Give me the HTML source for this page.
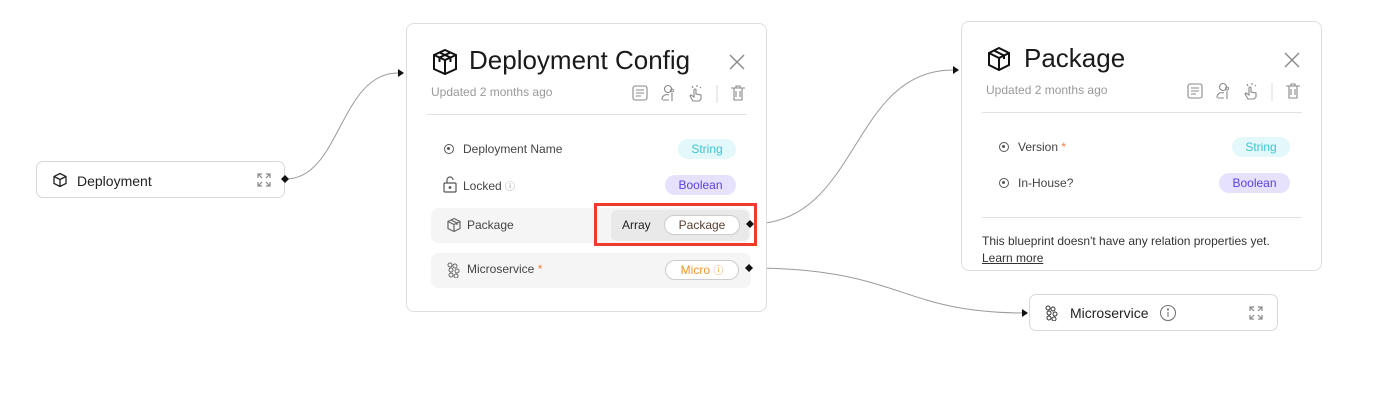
<!DOCTYPE html><html><head><style>
*{box-sizing:border-box;margin:0;padding:0}
body{width:1392px;height:407px;background:#fff;position:relative;overflow:hidden;font-family:"Liberation Sans",sans-serif;color:#222}
.abs{position:absolute}
.card{position:absolute;background:#fff;border:1px solid #dedee2;border-radius:8px}
.node{position:absolute;background:#fff;border:1px solid #d8d8dc;border-radius:7px;font-size:14px;color:#222}
.tag{position:absolute;height:20px;border-radius:10px;font-size:12px;line-height:20px;text-align:center}
.str{background:#e2f8fa;color:#3cc4d4}
.bool{background:#e6e2fd;color:#5b3fe0}
.lbl{position:absolute;font-size:12px;color:#444}
.gray{color:#999;font-size:12px}
.dot{position:absolute;width:10px;height:10px;border:1.3px solid #555;border-radius:50%}
.dot:after{content:"";position:absolute;left:2.2px;top:2.2px;width:3px;height:3px;background:#555;border-radius:50%}
</style></head><body>
<svg class="abs" style="left:0;top:0" width="1392" height="407">
<g fill="none" stroke="#9a9a9a" stroke-width="1">
<path d="M286 179 C340 179 340 73 398 73"/>
<path d="M751 224 C860 224 850 70 953 70"/>
<path d="M751 268 C900 268 900 313 1024 313"/>
</g>
<g fill="#111">
<path d="M398 69 L404 73 L398 77Z"/><path d="M953 66 L959 70 L953 74Z"/><path d="M1022 309 L1028 313 L1022 317Z"/>
</g></svg>

<div class="node" style="left:36px;top:161px;width:249px;height:37px">
<svg class="abs" style="left:15px;top:10px" width="16" height="16" viewBox="0 0 16 16" fill="none" stroke="#222" stroke-width="1.3"><path d="M8 1.5L14 4.5V11.5L8 14.5L2 11.5V4.5Z M2 4.5L8 7.5L14 4.5 M8 7.5V14.5"/></svg>
<span class="abs" style="left:40px;top:11px">Deployment</span>
<svg class="abs" style="left:219px;top:10px" width="16" height="16" viewBox="0 0 16 16" fill="none" stroke="#888" stroke-width="1.2"><path d="M2 6V2H6M2 2L6 6M10 2H14V6M14 2L10 6M2 10V14H6M2 14L6 10M14 10V14H10M14 14L10 10"/></svg>
</div>

<div class="card" style="left:406px;top:23px;width:361px;height:289px">
<svg class="abs" style="left:24px;top:24px" width="28" height="28" viewBox="0 0 28 28" fill="none" stroke="#111" stroke-width="2"><path d="M14 2L25 7V21L14 26L3 21V7Z M3 7L14 12L25 7 M14 12V26 M8.5 4.5L19.5 9.5V14 M19.5 4.5L8.5 9.5V14"/></svg>
<div class="abs" style="left:62px;top:21px;font-size:26px;color:#1a1a1a">Deployment Config</div>
<svg class="abs" style="left:322px;top:30px" width="16" height="16" viewBox="0 0 16 16" stroke="#888" stroke-width="1.4"><path d="M1 1L15 15M15 1L1 15"/></svg>
<div class="abs gray" style="left:24px;top:61px">Updated 2 months ago</div>
<svg class="abs" style="left:224px;top:59px" width="120" height="20" viewBox="0 0 120 20" fill="none" stroke="#888" stroke-width="1.1"><rect x="2" y="3" width="14" height="14" rx="2"/><path d="M5 7H13M5 10H13M5 13H10"/><circle cx="37" cy="6" r="3.5"/><path d="M31 17C31 12 35 11 38 12M32 17H38M41 10V18M41 9a1.5 1.5 0 1 1 0.1 0"/><path d="M62 18L59 13L60 12L63 14V7a1 1 0 0 1 2 0V11L70 12V16L68 18Z M61 3L62 5M66 2V4M70 4L69 5"/><path d="M86 2V20" stroke="#ddd"/><path d="M100 5H114M103 5V17H111V5M105 5V3H109V5M105 8V14M109 8V14"/></svg>
<div class="abs" style="left:20px;top:90px;width:320px;height:1px;background:#e2e2e6"></div>
<div class="dot" style="left:37px;top:120px"></div>
<div class="lbl" style="left:56px;top:118px">Deployment Name</div>
<div class="tag str" style="left:271px;top:115px;width:58px">String</div>
<svg class="abs" style="left:36px;top:152px" width="14" height="17" viewBox="0 0 14 17" fill="none" stroke="#555" stroke-width="1.2"><rect x="1" y="7" width="12" height="9" rx="1"/><path d="M4 7V4a3 3 0 0 1 6 0"/><circle cx="7" cy="11.5" r="0.8" fill="#555"/></svg>
<div class="lbl" style="left:56px;top:154px">Locked <span style="color:#999;font-size:10px">ⓘ</span></div>
<div class="tag bool" style="left:258px;top:151px;width:71px">Boolean</div>
<div class="abs" style="left:24px;top:184px;width:320px;height:35px;background:#f5f5f6;border-radius:8px"></div>
<svg class="abs" style="left:39px;top:193px" width="16" height="16" viewBox="0 0 16 16" fill="none" stroke="#666" stroke-width="1.2"><path d="M8 1.5L14 4.5V11.5L8 14.5L2 11.5V4.5Z M2 4.5L8 7.5L14 4.5 M8 7.5V14.5 M5 3L11 6V8"/></svg>
<div class="lbl" style="left:60px;top:194px">Package</div>
<div class="abs" style="left:204px;top:186px;width:138px;height:31px;background:#e9e9ea;border-radius:6px"></div>
<div class="abs" style="left:215px;top:194px;font-size:12px;color:#222">Array</div>
<div class="tag" style="left:257px;top:191px;width:76px;background:#fff;border:1px solid #ccc;color:#5a3e30;line-height:18px">Package</div>
<div class="abs" style="left:24px;top:229px;width:320px;height:35px;background:#f5f5f6;border-radius:8px"></div>
<svg class="abs" style="left:39px;top:238px" width="16" height="16" viewBox="0 0 16 16" fill="none" stroke="#666" stroke-width="1"><circle cx="4" cy="3" r="2"/><circle cx="9" cy="4" r="2"/><circle cx="5" cy="8" r="2"/><circle cx="11" cy="9" r="2"/><circle cx="5" cy="13" r="2"/><circle cx="10" cy="14" r="2"/></svg>
<div class="lbl" style="left:60px;top:238px">Microservice <span style="color:#f08040">*</span></div>
<div class="tag" style="left:258px;top:236px;width:74px;background:#fff;border:1px solid #ccc;color:#f0952e;line-height:18px">Micro <span style="font-size:10px">ⓘ</span></div>
</div>
<div class="abs" style="left:594px;top:203px;width:163px;height:43px;border:3px solid #f03a2a"></div>

<div class="card" style="left:961px;top:21px;width:361px;height:250px">
<svg class="abs" style="left:24px;top:24px" width="26" height="26" viewBox="0 0 26 26" fill="none" stroke="#111" stroke-width="2"><path d="M13 2L23 7V19L13 24L3 19V7Z M3 7L13 12L23 7 M13 12V24 M8 4.5L18 9.5V13"/></svg>
<div class="abs" style="left:62px;top:21px;font-size:26px;color:#1a1a1a">Package</div>
<svg class="abs" style="left:322px;top:30px" width="16" height="16" viewBox="0 0 16 16" stroke="#888" stroke-width="1.4"><path d="M1 1L15 15M15 1L1 15"/></svg>
<div class="abs gray" style="left:24px;top:61px">Updated 2 months ago</div>
<svg class="abs" style="left:224px;top:59px" width="120" height="20" viewBox="0 0 120 20" fill="none" stroke="#888" stroke-width="1.1"><rect x="2" y="3" width="14" height="14" rx="2"/><path d="M5 7H13M5 10H13M5 13H10"/><circle cx="37" cy="6" r="3.5"/><path d="M31 17C31 12 35 11 38 12M32 17H38M41 10V18M41 9a1.5 1.5 0 1 1 0.1 0"/><path d="M62 18L59 13L60 12L63 14V7a1 1 0 0 1 2 0V11L70 12V16L68 18Z M61 3L62 5M66 2V4M70 4L69 5"/><path d="M86 2V20" stroke="#ddd"/><path d="M100 5H114M103 5V17H111V5M105 5V3H109V5M105 8V14M109 8V14"/></svg>
<div class="abs" style="left:20px;top:90px;width:320px;height:1px;background:#e2e2e6"></div>
<div class="dot" style="left:37px;top:120px"></div>
<div class="lbl" style="left:56px;top:118px">Version <span style="color:#f08040">*</span></div>
<div class="tag str" style="left:270px;top:115px;width:58px">String</div>
<div class="dot" style="left:37px;top:156px"></div>
<div class="lbl" style="left:56px;top:154px">In-House?</div>
<div class="tag bool" style="left:257px;top:151px;width:71px">Boolean</div>
<div class="abs" style="left:20px;top:195px;width:320px;height:1px;background:#e2e2e6"></div>
<div class="abs" style="left:20px;top:211px;font-size:12px;color:#333;line-height:17px">This blueprint doesn't have any relation properties yet.<br><span style="text-decoration:underline">Learn more</span></div>
</div>

<div class="node" style="left:1029px;top:294px;width:249px;height:37px">
<svg class="abs" style="left:14px;top:10px" width="16" height="16" viewBox="0 0 16 16" fill="none" stroke="#333" stroke-width="1"><circle cx="4" cy="3" r="2"/><circle cx="9" cy="4" r="2"/><circle cx="5" cy="8" r="2"/><circle cx="11" cy="9" r="2"/><circle cx="5" cy="13" r="2"/><circle cx="10" cy="14" r="2"/></svg>
<span class="abs" style="left:40px;top:10px">Microservice</span>
<svg class="abs" style="left:129px;top:9px" width="18" height="18" viewBox="0 0 18 18" fill="none" stroke="#777" stroke-width="1.1"><circle cx="9" cy="9" r="7.5"/><path d="M9 8V13"/><circle cx="9" cy="5.5" r="0.6" fill="#777"/></svg>
<svg class="abs" style="left:218px;top:10px" width="16" height="16" viewBox="0 0 16 16" fill="none" stroke="#888" stroke-width="1.2"><path d="M2 6V2H6M2 2L6 6M10 2H14V6M14 2L10 6M2 10V14H6M2 14L6 10M14 10V14H10M14 14L10 10"/></svg>
</div>

<svg class="abs" style="left:0;top:0;z-index:5" width="1392" height="407">
<g fill="#111">
<path d="M285 175 L289 179 L285 183 L281 179Z"/><path d="M750 220 L754 224 L750 228 L746 224Z"/><path d="M749 264 L753 268 L749 272 L745 268Z"/>
</g></svg>
</body></html>
